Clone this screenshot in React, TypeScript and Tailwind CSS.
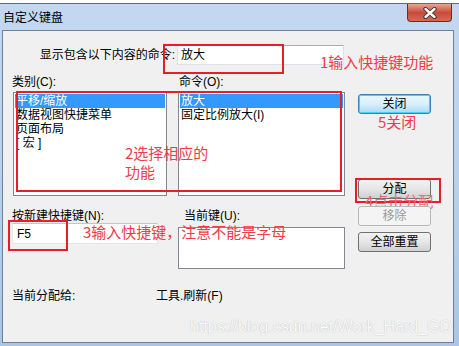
const red = 'text-[#ef3b4a]';

function Btn({ label, kind = 'normal', className = '' }: { label: string; kind?: 'normal' | 'default' | 'disabled'; className?: string }) {
  const look =
    kind === 'default'
      ? 'border-[#3c7fb1] bg-gradient-to-b from-[#eaf6fd] via-[#d9f0fc] to-[#a7d9f5] text-black shadow-[inset_0_0_0_1px_#48d0f8]'
      : kind === 'disabled'
        ? 'border-[#b5b9bc] bg-[#f4f4f4] text-[#9a9a9a]'
        : 'border-[#707070] bg-gradient-to-b from-[#f3f3f3] via-[#e6e6e6] to-[#d0d0d0] text-black';
  return (
    <div className={`relative h-[20px] w-[73px] rounded-[3px] border flex items-center justify-center ${look} ${className}`}>
      {label}
    </div>
  );
}

function ListBox({ items, width }: { items: string[]; width: string }) {
  return (
    <div className={`h-[104px] ${width} border border-[#828790] bg-white p-[1px]`}>
      {items.map((item, i) => (
        <div key={item} className={`h-[14px] px-[1px] whitespace-pre ${i === 0 ? 'bg-[#3399ff] text-white' : ''}`}>
          {item}
        </div>
      ))}
    </div>
  );
}

export default function App() {
  return (
    <div className="relative w-[459px] h-[346px] overflow-hidden bg-white font-['Liberation_Sans','Noto_Sans_CJK_SC',sans-serif] text-[12px] leading-[14px] text-black">
      <div className="mt-[3px] h-[343px] border-t border-[#5d6b7a] bg-gradient-to-b from-[#c3d8f0] via-[#b9d1ec] to-[#a9c6e8] flex flex-col pl-[2px]">
        {/* title bar */}
        <div className="h-[26px] flex items-start justify-between">
          <span className="mt-[7px] ml-[1px]">自定义键盘</span>
          <div className="mr-[7px] w-[45px] h-[18px] rounded-b-[4px] border border-[#6e2a22] border-t-0 bg-gradient-to-b from-[#e7a595] via-[#c74a3c] to-[#d46a55] flex items-center justify-center">
            <svg width="16" height="12" viewBox="0 0 16 12">
              <path d="M3.5 2 L12.5 10 M12.5 2 L3.5 10" stroke="#3a2a2a" strokeWidth="4.2" strokeLinecap="round" />
              <path d="M3.5 2 L12.5 10 M12.5 2 L3.5 10" stroke="#fff" strokeWidth="2.4" strokeLinecap="round" />
            </svg>
          </div>
        </div>

        {/* client area */}
        <div className="w-[452px] h-[313px] border border-[#6f8096] bg-[#f0f0f0]">
          <div className="flex items-center pt-[14px]">
            <span className="w-[172px] text-right">显示包含以下内容的命令:</span>
            <div className="ml-[2px] w-[167px] h-[20px] bg-white border border-[#dde1e7] border-t-[#abadb3] flex items-center px-[3px]">放大</div>
          </div>

          <div className="flex">
            <div className="w-[342px] pl-[9px] flex flex-col">
              <div className="mt-[10px] flex">
                <span className="w-[167px]">类别(C):</span>
                <span>命令(O):</span>
              </div>
              <div className="mt-[3px] flex">
                <div className="ml-[1px]">
                  <ListBox width="w-[154px]" items={['平移/缩放', '数据视图快捷菜单', '页面布局', '[ 宏 ]']} />
                </div>
                <div className="ml-[11px]">
                  <ListBox width="w-[167px]" items={['放大', '固定比例放大(I)']} />
                </div>
              </div>
              <div className="mt-[13px] flex">
                <span className="w-[172px]">按新建快捷键(N):</span>
                <span>当前键(U):</span>
              </div>
              <div className="flex items-start">
                <div className="w-[146px] h-[21px] bg-white border border-[#e3e6ea] border-t-[#c2c5ca] flex items-center px-[4px]">F5</div>
                <div className="ml-[20px] mt-[4px] w-[167px] h-[42px] bg-white border border-[#828790]" />
              </div>
              <div className="mt-[20px] flex">
                <span className="w-[144px]">当前分配给:</span>
                <span>工具.刷新(F)</span>
              </div>
            </div>

            <div className="ml-[13px] flex flex-col">
              <Btn label="关闭" kind="default" className="mt-[29px]" />
              <Btn label="分配" className="mt-[65px]" />
              <Btn label="移除" kind="disabled" className="mt-[7px] z-30" />
              <Btn label="全部重置" className="mt-[6px]" />
            </div>
          </div>
        </div>
      </div>

      {/* watermark */}
      <div className="absolute left-[190px] top-[317px] text-[16px] leading-[20px] font-['Liberation_Sans',sans-serif] text-[#fbfbfb] [text-shadow:0_0_1px_#a8a8a8]">
        https://blog.csdn.net/Work_Hard_GO
      </div>

      {/* red annotations */}
      <div className="absolute left-[163px] top-[44px] w-[121px] h-[30px] border-2 border-[#e61e28]" />
      <div className="absolute left-[16px] top-[91px] w-[326px] h-[101px] border-2 border-[#e61e28]" />
      <div className="absolute left-[8px] top-[220px] w-[60px] h-[31px] border-2 border-[#e61e28]" />
      <div className="absolute left-[355px] top-[178px] w-[86px] h-[25px] border-2 border-[#e61e28] z-20" />

      <div className={`absolute left-[320px] top-[52px] text-[15px] leading-[20px] font-['Noto_Sans_CJK_SC',sans-serif] ${red}`}>1输入快捷键功能</div>
      <div className={`absolute left-[125px] top-[143px] text-[15px] leading-[19px] font-['Noto_Sans_CJK_SC',sans-serif] ${red}`}>
        2选择相应的
        <br />
        功能
      </div>
      <div className={`absolute left-[83px] top-[222px] text-[15px] leading-[20px] font-['Noto_Sans_CJK_SC',sans-serif] ${red}`}>3输入快捷键，注意不能是字母</div>
      <div className={`absolute left-[378px] top-[112px] text-[15px] leading-[20px] font-['Noto_Sans_CJK_SC',sans-serif] ${red}`}>5关闭</div>
      <div className="absolute z-[25] left-[365px] top-[191px] text-[15px] leading-[20px] font-['Noto_Sans_CJK_SC',sans-serif] text-[#f06474]">4点击分配</div>
    </div>
  );
}
